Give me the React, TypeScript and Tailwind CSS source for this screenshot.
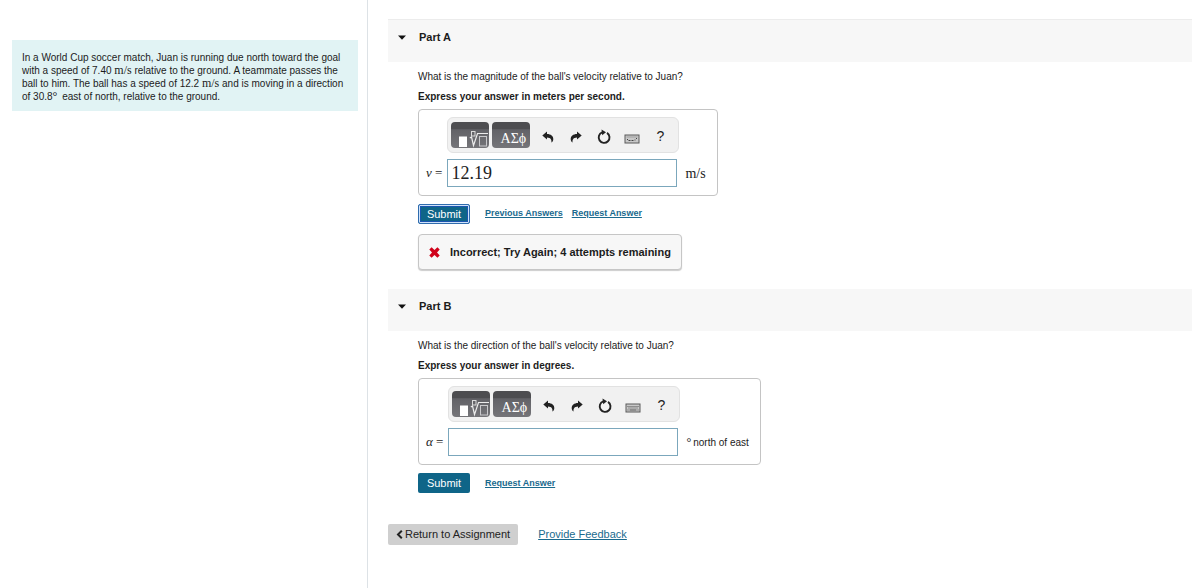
import type { ReactNode } from "react";

const sans = "font-['Liberation_Sans',Arial,sans-serif]";
const serif = "font-['Liberation_Serif','Times_New_Roman',serif]";

function TemplateIcon() {
  return (
    <svg width="38" height="26" viewBox="0 0 38 26" fill="none" aria-hidden="true">
      <rect x="8" y="14.500" width="8" height="10.500" fill="#fff" />
      <path d="M18.800 16l1.700-1L22.500 23.500L26.500 11.500H37" stroke="#ececec" strokeWidth="1.200" />
      <rect x="20.500" y="9.500" width="3.500" height="4.500" stroke="#dcdcdc" />
      <rect x="28.500" y="14.500" width="7" height="9.500" stroke="#c9c9cc" />
    </svg>
  );
}

function ReplyArrow({ flip = false }: { flip?: boolean }) {
  return (
    <svg width="12" height="12" viewBox="0 0 12 12" className={flip ? "-scale-x-100" : ""} aria-hidden="true">
      <path
        d="M0.300 4.500L5 0.600V2.900C8.800 2.900 11.500 5 11.300 8.200C11.200 9.700 10.600 10.700 9.400 11.600C9.800 8.500 8.600 6.500 5 6.400V8.600Z"
        fill="#222"
      />
    </svg>
  );
}

function ResetIcon() {
  return (
    <svg width="14" height="16" viewBox="0 0 14 16" fill="none" aria-hidden="true">
      <path d="M10 3.900A5.400 5.400 0 1 1 5.200 3.400" stroke="#222" strokeWidth="1.900" />
      <path d="M4.500 0.600L9 3.300L5.200 6.200Z" fill="#222" />
    </svg>
  );
}

function KeyboardIcon({ dense = false }: { dense?: boolean }) {
  return (
    <svg width="16" height="10" viewBox="0 0 16 10" fill="none" aria-hidden="true">
      <rect x="1" y="1" width="14" height="8" fill="#c8c8c8" stroke="#5a5a5a" />
      {dense ? (
        <>
          <path d="M2.500 3.500h11M3.500 5h10" stroke="#555" strokeDasharray="1 1" />
          <path d="M2.500 7h1M4.500 7h7M12.500 7h1" stroke="#555" />
        </>
      ) : (
        <>
          <path d="M2.500 3h11" stroke="#a0a0a0" />
          <path d="M3 5.500h1M12 4.500h1M4.500 6.500h2M7.500 6.500h2M10.500 6h1" stroke="#444" />
        </>
      )}
    </svg>
  );
}

function CrossIcon() {
  return (
    <svg width="11" height="11" viewBox="0 0 11 11" aria-hidden="true">
      <path
        d="M2.600 0.300L5.500 2.900L8.400 0.300L10.700 2.600L8 5.500L10.700 8.400L8.400 10.700L5.500 8L2.600 10.700L0.300 8.400L3 5.500L0.300 2.600Z"
        fill="#d0021b"
      />
    </svg>
  );
}

function ToolButton({ label, children }: { label: string; children: ReactNode }) {
  return (
    <button type="button" aria-label={label} className="flex h-7 w-7 items-center justify-center pt-[3px]">
      {children}
    </button>
  );
}

const paletteButton =
  "flex h-[26px] w-[38px] items-end justify-center overflow-hidden rounded bg-linear-to-b from-[#4d4d50] from-25% via-[#626267] via-30% to-[#757579] text-white";

function Toolbar({ denseKeyboard = false }: { denseKeyboard?: boolean }) {
  return (
    <div className="flex h-9 w-[232px] items-center rounded-md border border-[#e2e2e2] bg-[#f1f1f1] pl-[3px]">
      <button type="button" aria-label="Templates" className={paletteButton}>
        <TemplateIcon />
      </button>
      <button type="button" aria-label="Greek symbols" className={`${paletteButton} ml-[3px] mr-1`}>
        <span className={`${serif} pl-1 text-[14px] leading-[18px]`}>ΑΣϕ</span>
      </button>
      <ToolButton label="Undo">
        <ReplyArrow />
      </ToolButton>
      <ToolButton label="Redo">
        <ReplyArrow flip />
      </ToolButton>
      <ToolButton label="Reset">
        <ResetIcon />
      </ToolButton>
      <ToolButton label="Keyboard shortcuts">
        <span className="pt-1">
          <KeyboardIcon dense={denseKeyboard} />
        </span>
      </ToolButton>
      <ToolButton label="Help">
        <span className="text-[14px] text-[#222]">?</span>
      </ToolButton>
    </div>
  );
}

interface AnswerBoxProps {
  id: string;
  symbol: string;
  value: string;
  unit: ReactNode;
  denseKeyboard?: boolean;
}

function AnswerBox({ id, symbol, value, unit, denseKeyboard }: AnswerBoxProps) {
  return (
    <div className="grid w-fit grid-cols-[auto_auto_auto] items-center gap-y-[6px] rounded border border-[#c4c4c4] pt-[7px] pr-[11px] pb-2 pl-[7px]">
      <div className="col-start-2">
        <Toolbar denseKeyboard={denseKeyboard} />
      </div>
      <label htmlFor={id} className={`${serif} col-start-1 pr-[5px] text-[13px] leading-4`}>
        <i>{symbol}</i> =
      </label>
      <input
        id={id}
        type="text"
        defaultValue={value}
        className={`${serif} h-7 w-[230px] border border-[#7ba7bc] bg-white px-[3px] text-[18px] text-[#222] outline-none`}
      />
      <div className="pl-[6px]">{unit}</div>
    </div>
  );
}

function PartHeader({ title }: { title: string }) {
  return (
    <h2 className="h-[42px] bg-[#f7f7f7]">
      <button type="button" className="flex h-[34px] items-center gap-[13px] pl-[10px] text-[11px] font-bold">
        <svg width="8" height="5" viewBox="0 0 8 5" aria-hidden="true">
          <path d="M0 0.500h8L4 4.800Z" fill="#111" />
        </svg>
        {title}
      </button>
    </h2>
  );
}

function Prompt({ question, instruction }: { question: string; instruction: string }) {
  return (
    <>
      <p className="pt-[9px] leading-3">{question}</p>
      <p className="pt-2 pb-[6px] leading-3 font-bold">{instruction}</p>
    </>
  );
}

function ActionLink({ children }: { children: ReactNode }) {
  return (
    <a href="#" className="text-[9px] font-bold text-[#1a6a8e] underline">
      {children}
    </a>
  );
}

function Degree() {
  return <span className={`${serif} pr-[2px] text-[12px] leading-none`}>°</span>;
}

function InlineUnit() {
  return <span className={`${serif} text-[12px] leading-none`}>m/s</span>;
}

const submit = "h-5 w-[52px] text-[11px] text-white bg-[#0f6588] rounded-xs";

export default function App() {
  return (
    <div className={`${sans} flex min-h-screen bg-white text-[10px] text-[#1c1c1c]`}>
      <aside className="w-[368px] shrink-0 border-r border-[#dde2e6] pt-10 pr-[9px] pl-3">
        <div className="bg-[#e1f3f4] pt-[11px] pr-1 pb-2 pl-[10px] leading-[13px]">
          <p>
            In a World Cup soccer match, Juan is running due north toward the goal with a speed of 7.40 <InlineUnit />{" "}
            relative to the ground. A teammate passes the ball to him. The ball has a speed of 12.2 <InlineUnit /> and
            is moving in a direction of 30.8
            <Degree /> east of north, relative to the ground.
          </p>
        </div>
      </aside>

      <main className="min-w-0 flex-1 pt-5 pl-5">
        <section>
          <div className="-mt-px border-t border-[#ececec]">
            <PartHeader title="Part A" />
          </div>
          <div className="pl-[30px]">
            <Prompt
              question="What is the magnitude of the ball's velocity relative to Juan?"
              instruction="Express your answer in meters per second."
            />
            <AnswerBox
              id="answer-a"
              symbol="v"
              value="12.19"
              unit={<span className={`${serif} text-[14px]`}>m/s</span>}
            />
            <div className="flex items-center pt-2">
              <button
                type="button"
                className={`${submit} border border-[#2f6cae] shadow-[inset_0_0_0_1px_#cfe2fa,inset_0_0_0_2px_#1a55b0]`}
              >
                Submit
              </button>
              <div className="flex gap-[9px] pl-[15px]">
                <ActionLink>Previous Answers</ActionLink>
                <ActionLink>Request Answer</ActionLink>
              </div>
            </div>
            <div
              role="status"
              className="mt-[10px] flex h-9 w-fit items-center gap-[10px] rounded border border-[#c6c6c6] bg-[#f7f7f7] px-[10px] text-[11px] font-bold shadow-[0_1px_1px_#ccc]"
            >
              <CrossIcon />
              Incorrect; Try Again; 4 attempts remaining
            </div>
          </div>
        </section>

        <section className="pt-[19px]">
          <PartHeader title="Part B" />
          <div className="pl-[30px]">
            <Prompt
              question="What is the direction of the ball's velocity relative to Juan?"
              instruction="Express your answer in degrees."
            />
            <AnswerBox
              id="answer-b"
              symbol="α"
              value=""
              denseKeyboard
              unit={
                <span>
                  <Degree />
                  north of east
                </span>
              }
            />
            <div className="flex items-center pt-2">
              <button type="button" className={submit}>
                Submit
              </button>
              <div className="pl-[15px]">
                <ActionLink>Request Answer</ActionLink>
              </div>
            </div>
          </div>
        </section>

        <footer className="flex items-center gap-5 pt-[31px] pb-6 text-[11px]">
          <a href="#" className="flex h-[21px] items-center gap-[2px] rounded-xs bg-[#cfcfcf] px-2 text-[#222]">
            <svg width="7" height="9" viewBox="0 0 7 9" fill="none" aria-hidden="true">
              <path d="M5.800 0.700L2 4.500L5.800 8.300" stroke="#222" strokeWidth="2" />
            </svg>
            Return to Assignment
          </a>
          <a href="#" className="text-[#1a6a8e] underline">
            Provide Feedback
          </a>
        </footer>
      </main>
    </div>
  );
}
